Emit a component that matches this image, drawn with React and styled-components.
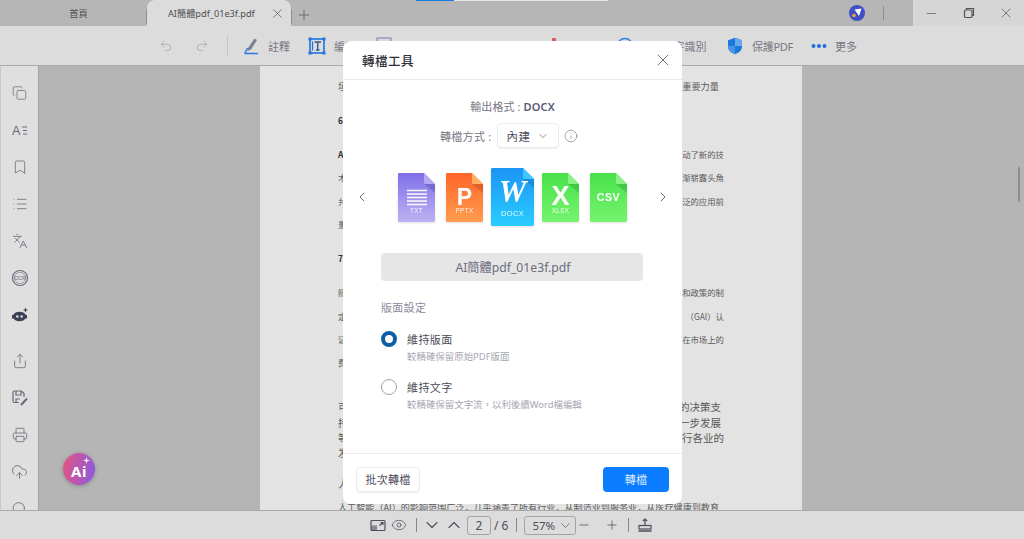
import React from "react";
import styled, { createGlobalStyle } from "styled-components";
import { Undo2, Redo2, Copy, Bookmark, List, Languages, Share, Printer, CloudUpload, Search, X, Minus, Plus, ChevronDown, ChevronUp, ChevronLeft, ChevronRight, Info, Eye } from "lucide-react";

const Global = createGlobalStyle`
  html, body { margin: 0; padding: 0; width: 1024px; height: 539px; overflow: hidden; background: #b5b5b5; }
  * { box-sizing: border-box; }
  body { font-family: "Noto Sans", "Noto Sans CJK TC", sans-serif; }
`;

const Shell = styled.div`position: relative; width: 1024px; height: 539px; display: flex; flex-direction: column; overflow: hidden;`;
const LoadBar = styled.div`position: absolute; left: 416px; top: 0; width: 192px; height: 1px; background: #e8e8e8;
  &::before { content: ""; display: block; width: 38px; height: 1px; background: #1a7be0; }`;

const TabBar = styled.div`height: 26px; flex: none; display: flex; align-items: stretch; background: #b6b6b6;`;
const HomeTab = styled.div`width: 147px; display: flex; align-items: center; justify-content: center; font-size: 9.2px; color: #4f4f4f; padding-left: 10px; position: relative;
  &::after { content: ""; position: absolute; right: 0; top: 9px; height: 15px; width: 1px; background: #8e8e8e; }`;
const ActiveTab = styled.div`width: 144px; background: #dcdcdc; border-radius: 8px 8px 0 0; display: flex; align-items: center; padding-left: 21px; font-size: 9.2px; color: #4f4f4f; position: relative;
  svg { position: absolute; left: 123px; top: 6px; }`;
const TabSep = styled.div`width: 1px; height: 15px; background: #8e8e8e; margin-top: 9px;`;
const AddTab = styled.div`width: 24px; display: flex; align-items: center; justify-content: center; color: #555; padding-top: 4px;`;
const TabSpacer = styled.div`flex: 1; display: flex; align-items: center; justify-content: flex-end; padding-right: 29px; gap: 18px;`;
const ThinSep = styled.div`width: 1px; height: 14px; background: #8e8e8e;`;
const WinControls = styled.div`width: 111px; background: #d6d6d6; display: grid; grid-template-columns: repeat(3, 37px); align-items: center; justify-items: center; color: #555;`;

const Toolbar = styled.div`height: 40px; flex: none; background: #dcdcdc; border-bottom: 1px solid #a9a9a9; display: flex; align-items: center; padding-left: 159px;`;
const HistoryBtn = styled.div`width: 36px; display: flex; justify-content: flex-start; color: #a5a5a5;`;
const ToolSep = styled.div`width: 1px; height: 19px; background: #c4c4c4; margin: 0 14px 0 -4px;`;
const Tool = styled.div`width: ${p => p.$w}px; flex: none; display: flex; align-items: center; gap: ${p => p.$gap || 8}px; font-size: 11px; letter-spacing: ${p => p.$ls || 0}px; color: #777782; white-space: nowrap;`;

const Main = styled.div`flex: 1; min-height: 0; display: flex;`;
const Sidebar = styled.div`width: 39px; flex: none; background: #dfdfdf; border-left: 1px solid #c8c8c8; border-right: 1px solid #a3a3a3; display: flex; flex-direction: column; align-items: center; padding-top: 18px; gap: 19px; overflow: hidden; color: #6a6a7c;
  > svg { height: 18px; flex: none; }`;
const SideGap = styled.div`height: 9px; margin-bottom: -19px; flex: none;`;
const Canvas = styled.div`flex: 1; display: flex; justify-content: center; background: #b5b5b5; position: relative; overflow: hidden;`;
const PageSheet = styled.div`width: 542px; height: 600px; margin-right: 1px; background: #e3e3e3; padding: 13px 78px 0 78px; color: #555;`;
const TextLine = styled.div`display: flex; justify-content: space-between; height: 14px; line-height: 14px; margin-top: ${p => p.$mt}px; margin-right: ${p => p.$mr || 0}px; white-space: nowrap;
  font-family: "Noto Sans CJK SC", sans-serif; font-size: ${p => p.$size || 8.4}px; color: #5a5a5a;`;
const LeftFrag = styled.span`font-weight: ${p => p.$bold ? 700 : 400}; color: ${p => p.$bold ? "#333" : "#5a5a5a"};`;
const Thumb = styled.div`position: absolute; right: 4px; top: 101px; width: 2px; height: 35px; background: #8c8c8c; border-radius: 1px;`;
const AiBubble = styled.div`position: absolute; left: 24px; top: 387px; width: 32px; height: 32px; padding-top: 3px; border-radius: 50%; background: linear-gradient(100deg, #e4557f, #8a59e2); color: #fff; font: 700 15px "Noto Sans", sans-serif; letter-spacing: .5px; display: flex; align-items: center; justify-content: center; box-shadow: 0 1px 4px rgba(0,0,0,.25);
  svg { position: absolute; right: 5px; top: 4px; }`;

const BottomBar = styled.div`height: 29px; flex: none; background: #dcdcdc; border-top: 1px solid #a9a9a9; display: flex; align-items: center; padding-left: 370px; color: #4e4e5c; font-size: 12px;`;
const BarSlot = styled.div`margin-left: ${p => p.$ml || 0}px; display: flex; align-items: center; flex: none;`;
const ChevSlot = styled(BarSlot)`width: 16px; justify-content: center; svg { margin: 0 -2px; flex: none; }`;
const BarSep = styled.div`width: 1px; height: 14px; background: #85858f; margin-left: ${p => p.$ml}px;`;
const PageBox = styled.div`width: 24px; height: 19px; margin-left: ${p => p.$ml}px; border: 1px solid #a3a3a3; border-radius: 3px; background: #dedede; display: flex; align-items: center; justify-content: center; font-size: 12px;`;
const ZoomBox = styled.div`width: 52px; height: 19px; margin-left: ${p => p.$ml}px; border: 1px solid #a3a3a3; border-radius: 3px; display: flex; align-items: center; justify-content: space-between; padding: 0 2px 0 7px; font-size: 11.5px;`;

const Modal = styled.div`position: absolute; left: 343px; top: 41px; width: 339px; height: 463px; background: #fff; border-radius: 8px; display: flex; flex-direction: column;`;
const ModalHead = styled.div`height: 39px; flex: none; border-bottom: 1px solid #e9e9e9; display: flex; align-items: center; justify-content: space-between; padding: 0 9px 0 19px; font-size: 12.5px; font-weight: 500; color: #303038; letter-spacing: .5px; svg { color: #555; }`;
const ModalBody = styled.div`flex: 1; display: flex; flex-direction: column; padding-top: 19px;`;
const FormatLine = styled.div`height: 16px; line-height: 16px; text-align: center; font-size: 11px; color: #777786; letter-spacing: .1px; b { color: #5a5a74; font-weight: 600; }`;
const MethodRow = styled.div`margin-top: 8px; height: 25px; display: flex; align-items: center; font-size: 11px; color: #777786; padding-left: 97px; letter-spacing: .3px; svg { flex: none; }`;
const Select = styled.div`width: 62px; height: 25px; margin-left: 5px; margin-right: 5px; border: 1px solid #ececec; border-radius: 4px; box-shadow: 0 1px 1px rgba(0,0,0,.06); display: flex; align-items: center; justify-content: space-between; padding: 0 9px; font-size: 11.5px; color: #4c4c58;`;
const Carousel = styled.div`margin-top: 20px; height: 58px; display: flex; align-items: center; justify-content: space-between; padding: 0 11px; color: #5a5d72;`;
const FileStrip = styled.div`display: flex; align-items: center; gap: 11px; margin-left: -1px;`;
const FileSvg = styled.svg`flex: none; margin: ${p => p.$big ? "0 -3px" : "0"}; filter: drop-shadow(0 1px 1px rgba(0,0,0,.12));`;
const FileName = styled.div`margin: 27px 39px 0 38px; height: 28px; padding-left: 2px; border-radius: 4px; background: #e6e6e6; display: flex; align-items: center; justify-content: center; font-size: 12.2px; color: #6d6d7e;`;
const SectionTitle = styled.div`margin: 19px 0 0 38px; height: 16px; line-height: 16px; font-size: 11px; color: #8a8a9e; letter-spacing: .3px;`;
const OptionRow = styled.div`margin: 15px 0 0 38px; height: 16px; display: flex; align-items: center; gap: 10px; font-size: 11px; color: #4c4c58; letter-spacing: .4px;`;
const Radio = styled.span`width: 16px; height: 16px; border-radius: 50%; flex: none; background: #fff; border: ${p => p.$on ? "4.5px solid #0a5ea6" : "1px solid #a5a5a5"};`;
const OptionDesc = styled.div`margin: 3px 0 0 64px; height: 14px; line-height: 14px; font-size: 9.45px; color: #a7a7b2;`;
const ModalFoot = styled.div`height: 51px; flex: none; border-top: 1px solid #ececec; display: flex; align-items: center; justify-content: space-between; padding: 0 13px; margin-top: auto;`;
const GhostBtn = styled.div`width: 64px; height: 25px; border: 1px solid #ececec; border-radius: 4px; box-shadow: 0 1px 1px rgba(0,0,0,.06); display: flex; align-items: center; justify-content: center; font-size: 11px; color: #4c4c58; letter-spacing: .2px;`;
const PrimaryBtn = styled.div`width: 66px; height: 25px; border-radius: 4px; background: #0a7cff; display: flex; align-items: center; justify-content: center; font-size: 11px; color: #d9ebff; letter-spacing: .3px;`;

const FILES = [
  { id: "txt", a: "#7f6fe8", b: "#bdb2f4", fold: "#b5a8f2", dark: "#5b4fb0", label: "TXT", w: 37, h: 49 },
  { id: "ppt", a: "#ff652a", b: "#ff9c4e", fold: "#ffb060", dark: "#c04a18", label: "PPTX", glyph: "P", w: 37, h: 49 },
  { id: "doc", a: "#1b94f4", b: "#2acdff", fold: "#3fc8ff", dark: "#1071c0", label: "DOCX", glyph: "W", w: 43, h: 58 },
  { id: "xls", a: "#49e14a", b: "#74f46d", fold: "#8af084", dark: "#2ca52e", label: "XLSX", glyph: "X", w: 37, h: 49 },
  { id: "csv", a: "#49e14a", b: "#74f46d", fold: "#8af084", dark: "#2ca52e", word: "CSV", w: 37, h: 49 },
];

function FileIcon({ f }) {
  const { w, h } = f;
  const c = w - 11;
  const s = w / 37;
  return (
    <FileSvg $big={f.id === "doc"} width={w} height={h} viewBox={`0 0 ${w} ${h}`}>
      <defs><linearGradient id={f.id} x1="0" y1="0" x2="0" y2="1"><stop offset="0" stopColor={f.a} /><stop offset="1" stopColor={f.b} /></linearGradient></defs>
      <path d={`M1.5 0H${c}L${w} 11V${h - 1.5}a1.5 1.5 0 0 1-1.5 1.5H1.5A1.5 1.5 0 0 1 0 ${h - 1.5}V1.5A1.5 1.5 0 0 1 1.5 0Z`} fill={`url(#${f.id})`} />
      <path d={`M${c} 11H${w}V20Z`} fill={f.dark} opacity=".45" />
      <path d={`M${c} 0L${w} 11H${c + 1}a1 1 0 0 1-1-1Z`} fill={f.fold} />
      {f.id === "txt" && <path d="M9 17.500H29M9 21H29M9 24.500H29M9 28H29M9 31.500H29" stroke="#fff" strokeWidth="1.400" opacity=".95" />}
      {f.glyph === "P" && <text x="18.500" y="32" textAnchor="middle" fill="#fff" fontFamily="Liberation Sans" fontWeight="700" fontSize="23">P</text>}
      {f.glyph === "W" && <text x="21.500" y="34" textAnchor="middle" fill="#fff" fontFamily="Liberation Serif" fontStyle="italic" fontWeight="700" fontSize="31">W</text>}
      {f.glyph === "X" && <text x="18.500" y="32" textAnchor="middle" fill="#fff" fontFamily="Liberation Sans" fontWeight="700" fontSize="27">X</text>}
      {f.word && <text x="18.500" y="28" textAnchor="middle" fill="#fff" fontFamily="Liberation Sans" fontWeight="700" fontSize="10.500" letterSpacing=".6">{f.word}</text>}
      {f.label && <text x={w / 2} y={f.id === "doc" ? 48 : 39.500} textAnchor="middle" fill="#fff" fillOpacity=".9" fontFamily="Liberation Sans" fontSize={6 * s + (f.id === "doc" ? 0.5 : 0.3)} letterSpacing=".4">{f.label}</text>}
    </FileSvg>
  );
}

const I = ({ children, w = 18, h = 18, vb }) => <svg width={w} height={h} viewBox={vb || `0 0 ${w} ${h}`} fill="none" stroke="currentColor" strokeWidth="1.2">{children}</svg>;

const PenIcon = () => <svg width="18" height="18" viewBox="0 0 18 18"><path d="M6 11 12.500 1.500 15 3 9 12.500 5.500 14Z" fill="#7a7f92" /><path d="M2.500 16.500H16" stroke="#2f7fe0" strokeWidth="1.600" /><path d="M5.500 11 3 16" stroke="#2f7fe0" strokeWidth="1.600" /></svg>;
const EditIcon = () => <svg width="18" height="18" viewBox="0 0 18 18" fill="none"><rect x="2" y="2" width="14" height="14" stroke="#1f74e0" strokeWidth="1.600" /><path d="M0.500 0.500h3v3h-3zM14.500 0.500h3v3h-3zM0.500 14.500h3v3h-3zM14.500 14.500h3v3h-3z" fill="#1f74e0" /><path d="M6.500 5H13M9.700 5V13M8 13H11.500" stroke="#3a5a90" strokeWidth="1.400" /><path d="M4.500 4.500V13.500" stroke="#1f74e0" strokeWidth="1.200" /></svg>;
const GridIcon = () => <svg width="18" height="18" viewBox="0 0 18 18" fill="none" stroke="#6a7fa0"><rect x="2" y="1" width="14" height="15" /></svg>;
const RedIcon = () => <svg width="18" height="18" viewBox="0 0 18 18"><rect x="7" y="1" width="4" height="16" rx="1" fill="#d85a5a" /></svg>;
const OcrIcon = () => <svg width="18" height="18" viewBox="0 0 18 18" fill="none"><circle cx="9" cy="9" r="7.500" stroke="#2f7fe0" strokeWidth="1.500" /></svg>;
const ShieldIcon = () => <svg width="18" height="18" viewBox="0 0 18 18"><path d="M9 .8 16 3.200V9.500c0 3.800-3 6.300-7 7.700C5 15.800 2 13.300 2 9.500V3.200Z" fill="#1b78dc" /><path d="M9 .8 16 3.200V9H9Z" fill="#6aa8ea" /><path d="M2 9H9V17.200C5 15.800 2 13.300 2 9Z" fill="#4a94e6" /></svg>;
const DotsIcon = () => <svg width="16" height="18" viewBox="0 0 16 18"><circle cx="2.500" cy="9" r="2" fill="#1b70dc" /><circle cx="8" cy="9" r="2" fill="#1b70dc" /><circle cx="13.500" cy="9" r="2" fill="#1b70dc" /></svg>;

const OutlineIcon = () => <I><text x="1" y="14" fontSize="12.500" fill="currentColor" stroke="none" fontFamily="Liberation Sans">A</text><path d="M11 6H16M12 9.500H16M12 13H16" /></I>;
const OcrSide = () => <I><circle cx="9" cy="9" r="7.500" /><circle cx="9" cy="9" r="5.600" strokeWidth=".6" /><text x="9" y="11" textAnchor="middle" fontSize="5" fill="currentColor" stroke="none" fontFamily="Liberation Sans">OCR</text></I>;
const RobotIcon = () => <svg width="18" height="18" viewBox="0 0 18 18"><ellipse cx="8.500" cy="10.500" rx="6.500" ry="4.800" fill="#3d3f55" /><rect x="1" y="9" width="2" height="3.500" fill="#3d3f55" /><rect x="14" y="9" width="2" height="3.500" fill="#3d3f55" /><circle cx="6.300" cy="10.500" r="1.300" fill="#ddd" /><circle cx="10.700" cy="10.500" r="1.300" fill="#ddd" /><path d="M14.500 1.500 15.200 3.300 17 4 15.200 4.700 14.500 6.500 13.800 4.700 12 4 13.800 3.300Z" fill="#3d3f55" /></svg>;
const SaveEdit = () => <I><path d="M13 8V4.500L10.500 2H3.500A1.500 1.500 0 0 0 2 3.500V12A1.500 1.500 0 0 0 3.500 13.500H8" /><path d="M5 2V6H10V2M5 13V10H9" /><path d="M10 16 16 9.500" strokeWidth="2" /></I>;

const SwapScreen = () => <I w={16} h={14}><rect x="1" y="2.500" width="14" height="10" rx="1" /><rect x="1.500" y="7.500" width="5.500" height="4.500" fill="currentColor" stroke="none" opacity=".6" /><path d="M9.500 7.500 13 4.500M10.500 4.500H13V7" /></I>;
const StampIcon = () => <I w={16} h={16}><path d="M1.500 14H14.500" strokeWidth="1.500" /><rect x="2" y="8.500" width="12" height="3.500" /><path d="M8 2V8M5.800 4 8 2 10.200 4" /></I>;
const Restore = () => <I w={12} h={12}><rect x="1.500" y="3" width="7.500" height="7.500" rx="1" /><path d="M3.500 3V1.500H10.500V8.500H9" /></I>;

const ProfileDot = () => <svg width="16" height="16" viewBox="0 0 16 16"><circle cx="8" cy="8" r="8" fill="#3f4fc4" /><path d="M5.500 4.500 12.500 3.500 10 11Z" fill="#fff" /><circle cx="5" cy="10.500" r="1.800" fill="#f2a93b" /></svg>;

const LINES = [
  [0, "垣", "重要力量", { mr: 5, size: 9.200 }], [20, "6", "", { bold: 1 }], [20, "A", "动了新的技", { bold: 1 }],
  [9, "术", "渐崭露头角"], [10, "共", "泛的应用前"], [9, "景", ""], [20, "7", "", { bold: 1 }],
  [20, "随", "和政策的制"], [10, "定", "（GAI）认"], [9, "证", "在市场上的"], [9, "费", ""],
  [31, "可", "的决策支", { size: 10.500, mr: 3 }], [2, "持", "一步发展", { size: 10.500, mr: 3 }], [1, "等", "行各业的", { size: 10.500, mr: 0 }], [1, "发", "", { size: 10.500 }],
  [17, "人", "", { size: 10.500 }],
];

export default function App() {
  return (
    <Shell>
      <Global />
      <TabBar>
        <HomeTab>首頁</HomeTab>
        <ActiveTab>AI簡體pdf_01e3f.pdf<X size={15} strokeWidth={1.100} /></ActiveTab>
        <TabSep />
        <AddTab><Plus size={16} strokeWidth={1.100} /></AddTab>
        <TabSpacer><ProfileDot /><ThinSep /></TabSpacer>
        <WinControls><Minus size={15} strokeWidth={1.100} /><Restore /><X size={16} strokeWidth={1.100} /></WinControls>
      </TabBar>
      <Toolbar>
        <HistoryBtn><Undo2 size={14} strokeWidth={1.300} /></HistoryBtn>
        <HistoryBtn><Redo2 size={14} strokeWidth={1.300} /></HistoryBtn>
        <ToolSep />
        <Tool $w={66}><PenIcon />註釋</Tool>
        <Tool $w={67}><EditIcon />編輯</Tool>
        <Tool $w={170}><GridIcon />頁面</Tool>
        <Tool $w={71}><RedIcon />轉檔</Tool>
        <Tool $w={110} $gap={6}><OcrIcon />OCR文字識別</Tool>
        <Tool $w={85} $ls={-0.3}><ShieldIcon />保護PDF</Tool>
        <Tool $w={60}><DotsIcon />更多</Tool>
      </Toolbar>
      <Main>
        <Sidebar>
          <Copy size={15} strokeWidth={1.200} />
          <OutlineIcon />
          <Bookmark size={16} strokeWidth={1.200} />
          <List size={16} strokeWidth={1.200} />
          <Languages size={16} strokeWidth={1.200} />
          <OcrSide />
          <RobotIcon />
          <SideGap />
          <Share size={16} strokeWidth={1.200} />
          <SaveEdit />
          <Printer size={16} strokeWidth={1.200} />
          <CloudUpload size={17} strokeWidth={1.200} />
          <Search size={17} strokeWidth={1.200} />
        </Sidebar>
        <Canvas>
          <PageSheet>
            {LINES.map(([mt, l, r, o = {}], i) => (
              <TextLine key={i} $mt={mt} $mr={o.mr} $size={o.size}><LeftFrag $bold={o.bold}>{l}</LeftFrag><span>{r}</span></TextLine>
            ))}
            <TextLine $mt={9} $size={9.100}><span>人工智能（AI）的影响范围广泛，几乎涵盖了所有行业，从制造业到服务业，从医疗健康到教育</span></TextLine>
          </PageSheet>
          <Thumb />
          <AiBubble>Ai<svg width="7" height="7" viewBox="0 0 8 8"><path d="M4 0 4.800 3.200 8 4 4.800 4.800 4 8 3.200 4.800 0 4 3.200 3.200Z" fill="#fff" /></svg></AiBubble>
        </Canvas>
      </Main>
      <BottomBar>
        <BarSlot><SwapScreen /></BarSlot>
        <BarSlot $ml={5}><Eye size={16} strokeWidth={1.100} /></BarSlot>
        <BarSep $ml={9} />
        <ChevSlot $ml={7}><ChevronDown size={20} strokeWidth={1.300} /></ChevSlot>
        <ChevSlot $ml={6}><ChevronUp size={20} strokeWidth={1.300} /></ChevSlot>
        <PageBox $ml={5}>2</PageBox>
        <BarSlot $ml={3}>/ 6</BarSlot>
        <BarSep $ml={8} />
        <ZoomBox $ml={7}>57%<ChevronDown size={15} strokeWidth={1.100} /></ZoomBox>
        <BarSlot $ml={1}><Minus size={14} strokeWidth={1.300} /></BarSlot>
        <BarSlot $ml={14}><Plus size={14} strokeWidth={1.300} /></BarSlot>
        <BarSep $ml={9} />
        <BarSlot $ml={8}><StampIcon /></BarSlot>
      </BottomBar>
      <LoadBar />
      <Modal>
        <ModalHead>轉檔工具<X size={20} strokeWidth={1.000} /></ModalHead>
        <ModalBody>
          <FormatLine>輸出格式 : <b>DOCX</b></FormatLine>
          <MethodRow>轉檔方式 :<Select>內建<ChevronDown size={12} strokeWidth={1.200} /></Select><Info size={14} strokeWidth={1.100} /></MethodRow>
          <Carousel>
            <ChevronLeft size={16} strokeWidth={1.400} />
            <FileStrip>{FILES.map(f => <FileIcon key={f.id} f={f} />)}</FileStrip>
            <ChevronRight size={16} strokeWidth={1.400} />
          </Carousel>
          <FileName>AI簡體pdf_01e3f.pdf</FileName>
          <SectionTitle>版面設定</SectionTitle>
          <OptionRow><Radio $on />維持版面</OptionRow>
          <OptionDesc>較精確保留原始PDF版面</OptionDesc>
          <OptionRow><Radio />維持文字</OptionRow>
          <OptionDesc>較精確保留文字流，以利後續Word檔編輯</OptionDesc>
          <ModalFoot><GhostBtn>批次轉檔</GhostBtn><PrimaryBtn>轉檔</PrimaryBtn></ModalFoot>
        </ModalBody>
      </Modal>
    </Shell>
  );
}
